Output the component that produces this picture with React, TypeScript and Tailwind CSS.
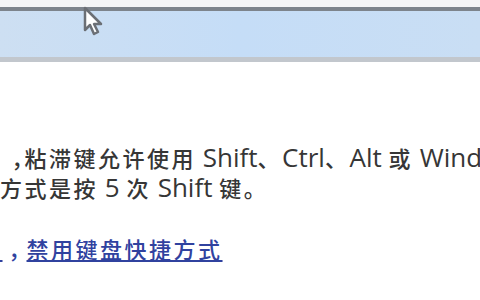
import React from "react";

const CJK = /[\u3000-\u303f\u4e00-\u9fff\uff00-\uffef]/;
const cjk = { fontFamily: '"Noto Sans CJK SC", sans-serif' };

function Mixed({ text }: { text: string }) {
  const parts = text.split(/([\u3000-\u303f\u4e00-\u9fff\uff00-\uffef]+)/).filter((p) => p.length > 0);
  return (
    <>
      {parts.map((p, i) =>
        CJK.test(p) ? (
          <span key={i} className="text-[22px] tracking-[2.5px]" style={cjk}>
            {p}
          </span>
        ) : (
          <span key={i} className="text-[26px] whitespace-pre">{p}</span>
        )
      )}
    </>
  );
}

export default function App() {
  const font = { fontFamily: '"Open Sans", "Noto Sans CJK SC", sans-serif' };
  return (
    <div className="w-[480px] h-[300px] bg-white overflow-hidden relative" style={font}>
      <div className="h-[7px] bg-[#f4f5f6]" />
      <div className="h-[4px] bg-[#7d848c]" />
      <div className="h-[46px] bg-gradient-to-r from-[#cddff2] via-[#c5ddf7] to-[#c9def4]" />
      <div className="h-[5px] bg-[#c2c7cd]" />
      <div className="pt-[80px] flex flex-col leading-[30px] font-medium text-[#363636] whitespace-nowrap">
        <div className="ml-[-22px] h-[30px]">
          <span className="text-[22px] tracking-[2.5px]" style={cjk}>时</span>
          <span className="text-[22px] inline-block w-[22px] pl-[9px]" style={cjk}>，</span>
          <Mixed text="粘滞键允许使用 Shift、Ctrl、Alt 或 Windows 徽标键" />
        </div>
        <div className="h-[30px]">
          <Mixed text="方式是按 5 次 Shift 键。" />
        </div>
        <div className="mt-[31px] ml-[-22px] h-[30px]">
          <span className="text-[#30429f] underline decoration-[#30429f] underline-offset-[2px] decoration-[2px]">
            <span className="text-[22px] tracking-[2.5px]" style={cjk}>式</span>
            <span className="text-[22px] inline-block w-[24px] pl-[6px]" style={cjk}>，</span>
            <Mixed text="禁用键盘快捷方式" />
          </span>
        </div>
      </div>
      <svg className="absolute left-[83px] top-[6px]" width="22" height="30" viewBox="0 0 22 30">
        <path d="M2 2 L2 24 L7 19 L11 28 L15 26 L11 18 L18 18 Z" fill="#ffffff" stroke="#6b6f75" strokeWidth="2.5" strokeLinejoin="round" />
      </svg>
    </div>
  );
}
